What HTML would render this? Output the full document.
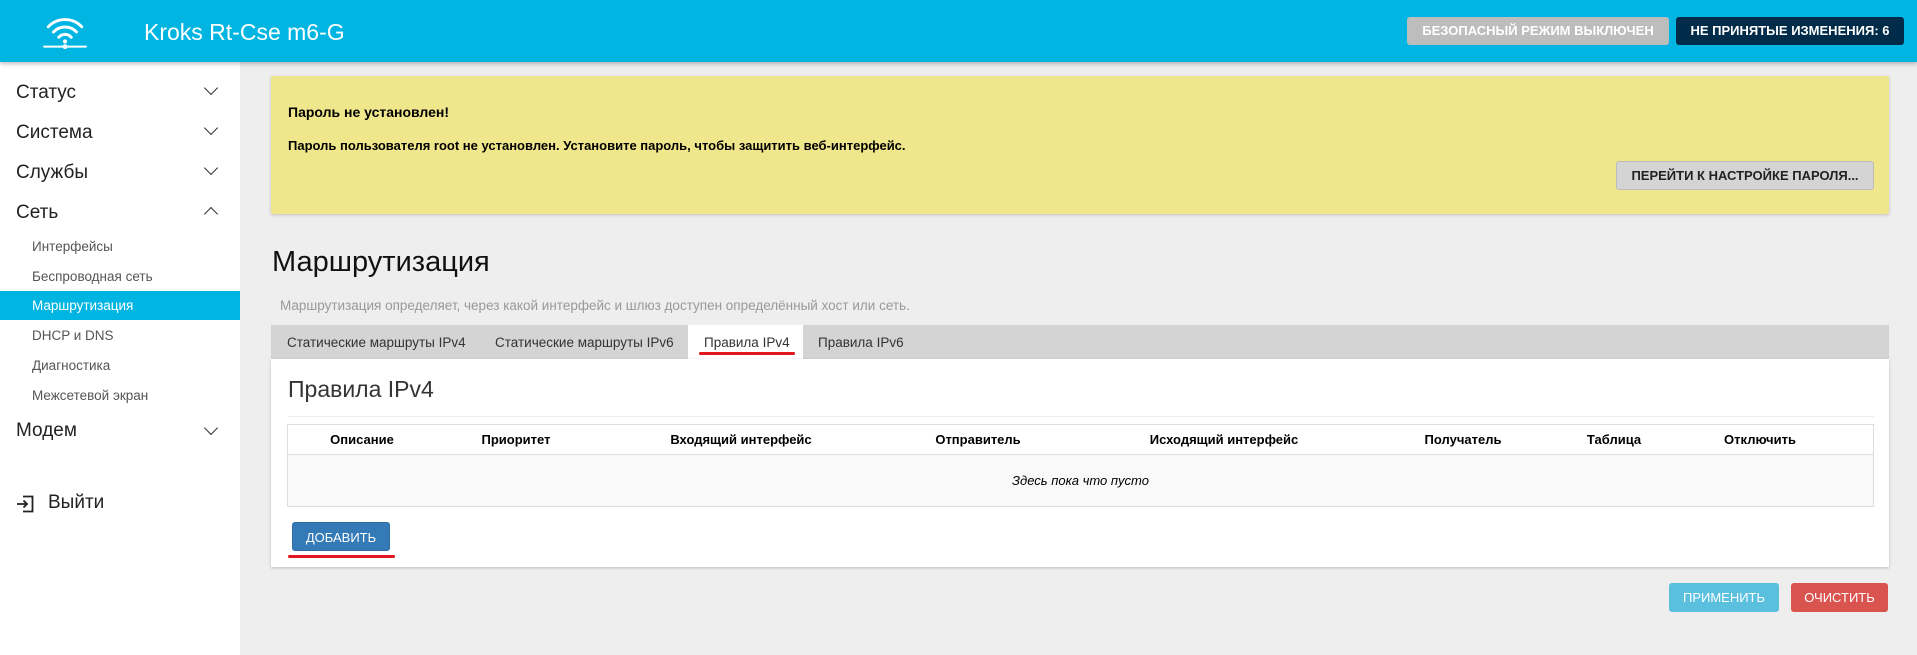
<!DOCTYPE html>
<html><head><meta charset="utf-8"><style>
*{box-sizing:border-box;margin:0;padding:0}
body{width:1917px;height:655px;overflow:hidden;background:#eeeeee;font-family:"Liberation Sans","Noto Sans CJK SC",sans-serif;color:#000;position:relative}
.abs{position:absolute}
.hdr{left:0;top:0;width:1917px;height:62px;background:#00b5e2;box-shadow:0 2px 4px rgba(0,0,0,.25);z-index:2}
.side{left:0;top:62px;width:240px;height:593px;background:#fff}
.mi{position:absolute;left:16px;font-size:19px;color:#222}
.chev{position:absolute;left:206px;width:10px;height:10px;border-right:1.5px solid #333;border-bottom:1.5px solid #333;transform:rotate(45deg)}
.chev.up{transform:rotate(225deg)}
.si{position:absolute;left:32px;font-size:13.5px;color:#555}
.btn{position:absolute;font-size:13px;text-align:center;border-radius:3px}
</style></head><body>
<div class="abs hdr">
<svg class="abs" style="left:42px;top:13px" width="46" height="38" viewBox="0 0 44 36" fill="none" stroke="#fff" stroke-width="2.8" stroke-linecap="round">
<path d="M6 13 A22 22 0 0 1 38 13"/><path d="M11 18 A15 15 0 0 1 33 18"/><path d="M16 23 A8 8 0 0 1 28 23"/><circle cx="22" cy="27" r="2" fill="#fff" stroke="none"/><path d="M2 32 H42" stroke-width="2"/><circle cx="22" cy="32" r="2.3" fill="#fff" stroke="none"/>
</svg>
<div class="abs" style="left:144px;top:19px;font-size:23px;color:#fff">Kroks Rt-Cse m6-G</div>
<div class="btn" style="left:1407px;top:17px;width:262px;height:28px;line-height:28px;background:#bdbdbd;color:#fff;font-weight:bold">БЕЗОПАСНЫЙ РЕЖИМ ВЫКЛЮЧЕН</div>
<div class="btn" style="left:1676px;top:17px;width:228px;height:28px;line-height:28px;background:#002b49;color:#fff;font-weight:bold">НЕ ПРИНЯТЫЕ ИЗМЕНЕНИЯ: 6</div>
</div>
<div class="abs side">
<div class="mi" style="top:20px">Статус</div><div class="chev" style="top:21px"></div>
<div class="mi" style="top:60px">Система</div><div class="chev" style="top:61px"></div>
<div class="mi" style="top:100px">Службы</div><div class="chev" style="top:101px"></div>
<div class="mi" style="top:140px">Сеть</div><div class="chev up" style="top:147px"></div>
<div class="si" style="top:177px">Интерфейсы</div>
<div class="si" style="top:207px">Беспроводная сеть</div>
<div class="abs" style="left:0;top:229px;width:240px;height:29px;background:#00b5e2"></div>
<div class="si" style="top:236px;color:#fff">Маршрутизация</div>
<div class="si" style="top:266px">DHCP и DNS</div>
<div class="si" style="top:296px">Диагностика</div>
<div class="si" style="top:326px">Межсетевой экран</div>
<div class="mi" style="top:358px">Модем</div><div class="chev" style="top:361px"></div>
<svg class="abs" style="left:16px;top:433px" width="18" height="18" viewBox="0 0 18 18" fill="none" stroke="#222" stroke-width="1.8"><path d="M7 1.5H16.5V16.5H7"/><path d="M1 9H11M7.5 5.5L11 9L7.5 12.5"/></svg>
<div class="mi" style="top:430px;left:48px">Выйти</div>
</div>
<div class="abs" style="left:271px;top:76px;width:1618px;height:138px;background:#f0e68c;border-radius:2px;box-shadow:0 1px 3px rgba(0,0,0,.2)"></div>
<div class="abs" style="left:288px;top:104px;font-size:14px;font-weight:bold">Пароль не установлен!</div>
<div class="abs" style="left:288px;top:138px;font-size:13px;font-weight:bold">Пароль пользователя root не установлен. Установите пароль, чтобы защитить веб-интерфейс.</div>
<div class="btn" style="left:1616px;top:161px;width:258px;height:29px;line-height:28px;background:#d4d4d4;border:1px solid #bbb;font-weight:bold;color:#222">ПЕРЕЙТИ К НАСТРОЙКЕ ПАРОЛЯ...</div>
<div class="abs" style="left:272px;top:246px;font-size:29px;color:#111">Маршрутизация</div>
<div class="abs" style="left:280px;top:298px;font-size:13.5px;color:#999">Маршрутизация определяет, через какой интерфейс и шлюз доступен определённый хост или сеть.</div>
<div class="abs" style="left:271px;top:325px;width:1618px;height:34px;background:#d4d4d4"></div>
<div class="abs" style="left:688px;top:325px;width:115px;height:34px;background:#fff"></div>
<div class="abs" style="left:287px;top:335px;font-size:13.5px;color:#333">Статические маршруты IPv4</div>
<div class="abs" style="left:495px;top:335px;font-size:13.5px;color:#333">Статические маршруты IPv6</div>
<div class="abs" style="left:704px;top:335px;font-size:13.5px;color:#333">Правила IPv4</div>
<div class="abs" style="left:818px;top:335px;font-size:13.5px;color:#333">Правила IPv6</div>
<div class="abs" style="left:699px;top:352px;width:96px;height:3px;background:#e3151f;border-radius:2px"></div>
<div class="abs" style="left:271px;top:359px;width:1618px;height:208px;background:#fff;box-shadow:0 1px 3px rgba(0,0,0,.2)"></div>
<div class="abs" style="left:288px;top:376px;font-size:23px;color:#333">Правила IPv4</div>
<div class="abs" style="left:288px;top:416px;width:1586px;height:1px;background:#eee"></div>
<div class="abs" style="left:287px;top:424px;width:1587px;height:83px;border:1px solid #ddd;background:#f9f9f9"></div>
<div class="abs" style="left:288px;top:425px;width:1585px;height:30px;background:#fff;border-bottom:1px solid #ddd"></div>
<div class="abs" style="top:432px;left:0;width:1917px;font-size:13px;font-weight:bold">
<span class="abs" style="left:362px;transform:translateX(-50%);white-space:nowrap">Описание</span>
<span class="abs" style="left:516px;transform:translateX(-50%);white-space:nowrap">Приоритет</span>
<span class="abs" style="left:741px;transform:translateX(-50%);white-space:nowrap">Входящий интерфейс</span>
<span class="abs" style="left:978px;transform:translateX(-50%);white-space:nowrap">Отправитель</span>
<span class="abs" style="left:1224px;transform:translateX(-50%);white-space:nowrap">Исходящий интерфейс</span>
<span class="abs" style="left:1463px;transform:translateX(-50%);white-space:nowrap">Получатель</span>
<span class="abs" style="left:1614px;transform:translateX(-50%);white-space:nowrap">Таблица</span>
<span class="abs" style="left:1760px;transform:translateX(-50%);white-space:nowrap">Отключить</span>
</div>
<div class="abs" style="left:287px;top:473px;width:1587px;text-align:center;font-size:13px;font-style:italic">Здесь пока что пусто</div>
<div class="btn" style="left:292px;top:522px;width:98px;height:29px;line-height:29px;background:#337ab7;color:#fff;border:1px solid #2e6da4">ДОБАВИТЬ</div>
<div class="abs" style="left:288px;top:555px;width:107px;height:3px;background:#e3151f;border-radius:2px"></div>
<div class="btn" style="left:1669px;top:583px;width:110px;height:29px;line-height:29px;background:#5bc0de;color:#fff">ПРИМЕНИТЬ</div>
<div class="btn" style="left:1791px;top:583px;width:97px;height:29px;line-height:29px;background:#d9534f;color:#fff">ОЧИСТИТЬ</div>
</body></html>
